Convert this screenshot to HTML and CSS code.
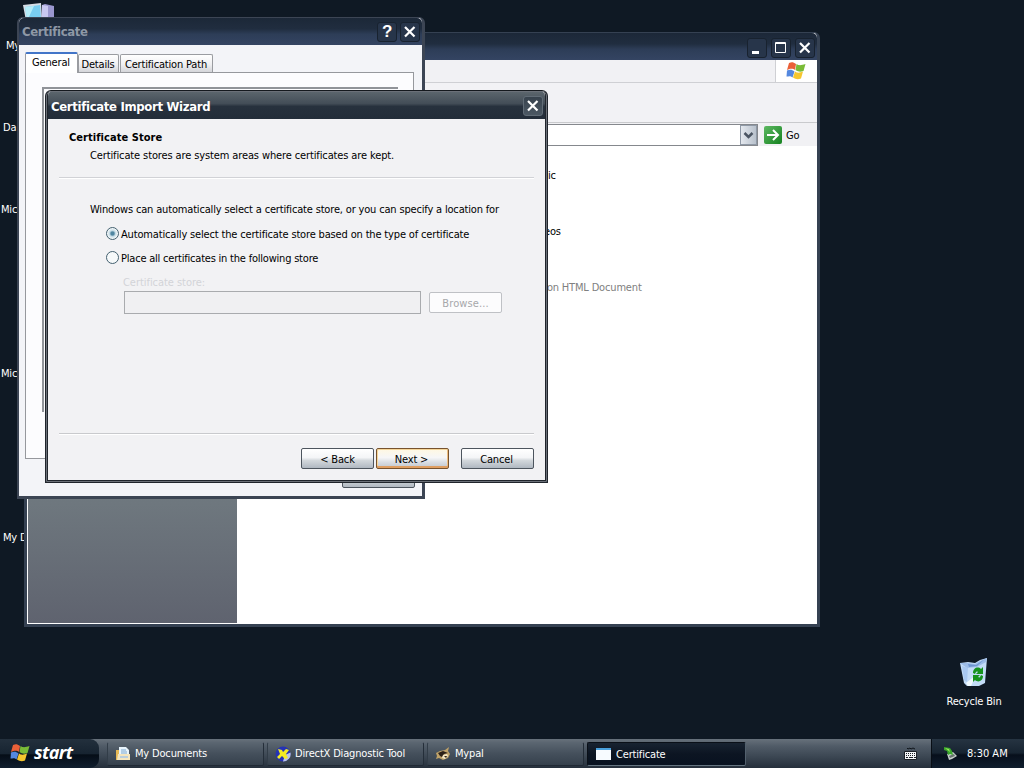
FILE: index.html
```html
<!DOCTYPE html>
<html lang="en">
<head>
    <meta charset="UTF-8">
    <title>Desktop</title>
    <link rel="stylesheet" href="styles.css">
</head>
<body>
    <div class="desktop">
        <svg class="icon-computer" width="32" height="18" viewBox="0 0 32 18">
            <path d="M19 2l3-1 9 2v15H18z" fill="#9a97cf"/>
            <path d="M19 2l6 1v15h-6z" fill="#c9c8f0"/>
            <path d="M0 2l18-2 1 18H3z" fill="#d5dde6"/>
            <path d="M2 4l15-2 1 14H4z" fill="#78cdf0"/>
            <path d="M2 4l9-1 -6 13H4z" fill="#b4ecf8"/>
        </svg>
        <span class="desk-label label-computer">My</span>
        <span class="desk-label label-dae">Da</span>
        <span class="desk-label label-mic1">Mic</span>
        <span class="desk-label label-mic2">Mic</span>
        <span class="desk-label label-docs">My D</span>

        <div class="recycle">
            <svg width="30" height="31" viewBox="0 0 30 31">
                <path d="M1 6l8-1 7 1 5-3 7-2-2 25-6 3H8L5 26z" fill="#c3dcf7"/>
                <path d="M1 6l8 0 7 1 5-3 7-3-1 4-9 5-10 1z" fill="#9dbde8"/>
                <path d="M9 7l8 1 9-6-8 7-8 1z" fill="#6f96d0"/>
                <path d="M3 9l6 2-1 14-3-2z" fill="#a9c8f0"/>
                <path d="M7 26l10-8-5 11H9z" fill="#f2faff"/>
                <path d="M14 16c0-5 5-7 8-4l2-2v7h-7l2-2c-2-1-2 0-3 2z" fill="#16931d"/>
                <path d="M24 19c0 5-5 7-8 4l-2 2v-7h7l-2 2c2 1 2 0 3-2z" fill="#16931d"/>
            </svg>
            <span class="recycle-label">Recycle Bin</span>
        </div>

        <div class="window explorer">
            <div class="titlebar">
                <div class="title-buttons">
                    <span class="tbtn"><svg width="18" height="18"><path d="M4 13.500h7" stroke="#fff" stroke-width="3"/></svg></span>
                    <span class="tbtn"><svg width="18" height="18"><path d="M3.500 3.500h10v10h-10zM3 4.500h11" fill="none" stroke="#fff"/></svg></span>
                    <span class="tbtn"><svg width="18" height="18"><path d="M4 4l9.500 9.500M13.500 4L4 13.500" stroke="#fff" stroke-width="2.200"/></svg></span>
                </div>
            </div>
            <div class="menubar">
                <div class="brand">
                    <svg width="20" height="18" viewBox="0 0 20 18">
                        <path d="M3 1c3-1 4-1 7 1L9 8C6 6 4 7 1 8z" fill="#ea6038"/>
                        <path d="M10.500 2c3 2 5 1 9 0l-2 7c-3 1-5 1-8-1z" fill="#79bb37"/>
                        <path d="M1 8.500c3-1 5-1 7.500 1l-2 6c-2-2-4-1-6-1z" fill="#5488df"/>
                        <path d="M9 9.500c3 2 5 1 8 0l-2 7c-3 1-5 1-8-1z" fill="#f5c62f"/>
                    </svg>
                </div>
            </div>
            <div class="toolbar"></div>
            <div class="addressbar">
                <div class="address-field"><span class="dropdown"><svg width="15" height="18"><path d="M3.500 7l4 4 4-4" fill="none" stroke="#4b5563" stroke-width="2.500"/></svg></span></div>
                <span class="go-icon"><svg width="18" height="18"><path d="M3 9h11M9 4l5 5-5 5" fill="none" stroke="#fff" stroke-width="2"/></svg></span>
                <span class="go-text">Go</span>
            </div>
            <div class="explorer-body">
                <div class="side-panel"></div>
                <div class="files">
                    <p class="file-name">ic</p>
                    <p class="file-name videos">eos</p>
                    <p class="file-name file-type">oon HTML Document</p>
                </div>
            </div>
        </div>

        <div class="window certificate">
            <div class="titlebar">
                <h2 class="title">Certificate</h2>
                <div class="title-buttons">
                    <span class="tbtn help">?</span>
                    <span class="tbtn"><svg width="18" height="18"><path d="M4 4l9.500 9.500M13.500 4L4 13.500" stroke="#fff" stroke-width="2.200"/></svg></span>
                </div>
            </div>
            <div class="cert-body">
                <div class="tabs">
                    <span class="tab active">General</span>
                    <span class="tab tab-details">Details</span>
                    <span class="tab tab-path">Certification Path</span>
                </div>
                <div class="tab-page"><div class="cert-info"></div></div>
                <div class="cert-footer"><span class="btn"></span></div>
            </div>
        </div>

        <div class="window wizard">
            <div class="titlebar">
                <h2 class="title">Certificate Import Wizard</h2>
                <div class="title-buttons">
                    <span class="tbtn"><svg width="18" height="18"><path d="M4 4l9.500 9.500M13.500 4L4 13.500" stroke="#fff" stroke-width="2.200"/></svg></span>
                </div>
            </div>
            <div class="wizard-body">
                <div class="wizard-head">
                    <h3 class="wizard-title">Certificate Store</h3>
                    <p class="wizard-sub">Certificate stores are system areas where certificates are kept.</p>
                </div>
                <div class="wizard-main">
                    <p class="intro">Windows can automatically select a certificate store, or you can specify a location for</p>
                    <div class="option"><span class="radio checked"></span><span class="opt-auto">Automatically select the certificate store based on the type of certificate</span></div>
                    <div class="option"><span class="radio"></span><span class="opt-place">Place all certificates in the following store</span></div>
                    <div class="store-label">Certificate store:</div>
                    <div class="store-row">
                        <div class="store-field"></div>
                        <span class="btn disabled">Browse...</span>
                    </div>
                </div>
                <div class="wizard-footer">
                    <span class="btn">&lt; Back</span>
                    <span class="btn default">Next &gt;</span>
                    <span class="btn cancel">Cancel</span>
                </div>
            </div>
        </div>

        <div class="taskbar">
            <div class="start">
                <svg width="20" height="18" viewBox="0 0 20 18">
                    <path d="M3 1c3-1 4-1 7 1L9 8C6 6 4 7 1 8z" fill="#ea6038"/>
                    <path d="M10.500 2c3 2 5 1 9 0l-2 7c-3 1-5 1-8-1z" fill="#79bb37"/>
                    <path d="M1 8.500c3-1 5-1 7.500 1l-2 6c-2-2-4-1-6-1z" fill="#5488df"/>
                    <path d="M9 9.500c3 2 5 1 8 0l-2 7c-3 1-5 1-8-1z" fill="#f5c62f"/>
                </svg>
                <span class="start-text">start</span>
            </div>
            <div class="tasks">
                <div class="task">
                    <svg width="16" height="16"><path d="M1 4h4l1-2h5v12H1z" fill="#e7b955"/><path d="M4 1h7l3 3v8H4z" fill="#e8f4fc"/><path d="M6 4h5M6 6h6M6 8h6" stroke="#7ba7cf"/><path d="M3 8h12v6H2z" fill="#f4e5bd"/><path d="M5 10h8v2H5z" fill="#b9cedd"/></svg>
                    <span>My Documents</span>
                </div>
                <div class="task">
                    <svg width="16" height="16"><circle cx="8" cy="8" r="7.500" fill="#2533b4"/><path d="M8 15.500a7.500 7.500 0 0 0 7.500-9L10 9z" fill="#b9c2e8"/><path d="M3 3l4 1 1 2 3-3 3 1-3 4 2 4-3 1-3-3-3 3-2-2 3-3z" fill="#f4ec22"/></svg>
                    <span>DirectX Diagnostic Tool</span>
                </div>
                <div class="task">
                    <svg width="16" height="16"><path d="M1 7l4-2 5-1 4-3-1 4 2 3-2 4-5 2-4-2-3 1 1-3z" fill="#bfa269"/><path d="M3 7l5-2 5 2-4 1-2 3-2-1z" fill="#2c2118"/><path d="M8 9l4-1 1 2-3 3-3-1z" fill="#f2e5c4"/><path d="M9 10l3 0-1 2z" fill="#342416"/></svg>
                    <span>Mypal</span>
                </div>
                <div class="task current">
                    <svg width="16" height="14"><path d="M0 0h15v12H0z" fill="#f7fbff"/><path d="M0 0h15v2H0z" fill="#4aa1dd"/></svg>
                    <span>Certificate</span>
                </div>
            </div>
            <svg class="keyboard" width="13" height="14"><path d="M3 1l1 1 2-1 1 1 2-1 2 1" fill="none" stroke="#10151b"/><path d="M.5 4.500h12v8H.5z" fill="#f4f6f8" stroke="#1b2026"/><path d="M2 6.500h10M2 8.500h10" stroke="#1b2026" stroke-dasharray="1 1"/><path d="M2 10.500h2M5 10.500h4M10 10.500h2" stroke="#1b2026"/></svg>
            <div class="tray">
                <svg width="14" height="14"><path d="M4 8l6-2 4 4-5 3-3 1z" fill="#c8cfcc"/><path d="M6 10l5-2 1 2-5 2z" fill="#68736f"/><path d="M1 1l6 1 2 3 1 4-3-1-2 1-1-4-3-1z" fill="#39a62b"/><path d="M2 2l4 1 1 3z" fill="#9ae65d"/></svg>
                <span class="clock">8:30 AM</span>
            </div>
        </div>
    </div>
</body>
</html>
```
FILE: styles.css
```css
* {
    margin: 0;
    padding: 0;
    box-sizing: border-box;
}
body {
    font-family: "DejaVu Sans Condensed", "DejaVu Sans", sans-serif;
    font-size: 11px;
    line-height: 14px;
    letter-spacing: -0.17px;
    color: #000;
    overflow: hidden;
}
svg {
    display: block;
    flex: none;
}
.desktop {
    position: relative;
    width: 1024px;
    height: 768px;
    overflow: hidden;
    background-color: #0f1924;
    white-space: nowrap;
}

/* desktop icons */
.icon-computer {
    position: absolute;
    left: 23px;
    top: 3px;
}
.desk-label {
    position: absolute;
    color: #fff;
}
.label-computer { left: 6px; top: 39px; }
.label-dae { left: 3px; top: 121px; }
.label-mic1 { left: 1px; top: 203px; }
.label-mic2 { left: 1px; top: 367px; }
.label-docs { left: 3px; top: 531px; }
.recycle {
    position: absolute;
    left: 944px;
    top: 657px;
    width: 60px;
    display: flex;
    flex-direction: column;
    align-items: center;
    gap: 7px;
    color: #fff;
}

/* windows */
.window {
    position: absolute;
    display: flex;
    flex-direction: column;
    border-radius: 6px 6px 0 0;
}
.titlebar {
    display: flex;
    align-items: center;
    flex: none;
    height: 27px;
    background: linear-gradient(#1c2838, #202d3f 40%, #2d3d57 60%, #344462);
    border-radius: 5px 5px 0 0;
}
.title {
    font-size: 13px;
    font-weight: bold;
    letter-spacing: -0.33px;
    color: #8e98a6;
}
.title-buttons {
    display: flex;
    gap: 3px;
    margin-left: auto;
}
.tbtn {
    width: 20px;
    height: 20px;
    border: 1px solid #18222f;
    border-radius: 3px;
    background-color: #27354a;
    color: #fff;
}
.explorer .title-buttons {
    gap: 4px;
}
.help {
    font: bold 17px/18px "Liberation Sans", sans-serif;
    text-align: center;
}
.btn {
    width: 73px;
    height: 21px;
    padding-top: 1px;
    line-height: 20px;
    border: 1px solid #4d555e;
    border-radius: 2px;
    background: linear-gradient(#fff 0%, #f4f5f7 45%, #d3d8dc 60%, #b0b8c1 100%);
    text-align: center;
}

.explorer {
    left: 24px;
    top: 32px;
    width: 796px;
    height: 595px;
    border: 1px solid #354152;
    border-right-width: 3px;
    border-bottom-width: 3px;
    border-left-width: 3px;
    background-color: #fff;
}
.explorer .titlebar {
    padding-right: 2px;
    padding-top: 2px;
}
.menubar {
    display: flex;
    flex: none;
    justify-content: flex-end;
    height: 23px;
    background-color: #f1f1f4;
    border-bottom: 1px solid #cfd0d4;
}
.brand {
    width: 42px;
    padding: 2px 0 0 10px;
    background-color: #fff;
    border-left: 1px solid #cfd0d4;
}
.toolbar {
    flex: none;
    height: 40px;
    background-color: #f2f2f5;
    border-bottom: 1px solid #c9cacd;
}
.addressbar {
    display: flex;
    align-items: center;
    flex: none;
    height: 23px;
    background-color: #f1f1f4;
}
.address-field {
    display: flex;
    justify-content: flex-end;
    width: 731px;
    height: 22px;
    border: 1px solid #85888d;
    background-color: #fff;
}
.dropdown {
    width: 17px;
    height: 20px;
    border: 1px solid #8f99a6;
    background: linear-gradient(90deg, #e4e8ee, #b8c1cc);
}
.go-icon {
    width: 18px;
    height: 18px;
    margin-left: 6px;
    border-radius: 2px;
    background: linear-gradient(135deg, #5db862, #168320);
}
.go-text {
    margin-left: 4px;
    padding-top: 2px;
}
.explorer-body {
    display: flex;
    flex: 1;
    border-left: 1px solid #fff;
    border-bottom: 1px solid #fff;
}
.side-panel {
    width: 209px;
    background: linear-gradient(#7c8a90 0%, #6e777e 75%, #5f636f 100%);
}
.files {
    padding: 23px 0 0 311px;
}
.file-name {
    margin-bottom: 42px;
}
.videos {
    margin-left: -4px;
}
.file-type {
    margin-left: -7px;
    color: #808080;
}

.certificate {
    left: 17px;
    top: 17px;
    width: 408px;
    height: 482px;
    border: 1px solid #3c4554;
    border-width: 1px 3px 3px 2px;
    background-color: #f3f4f8;
}
.certificate .titlebar {
    padding: 1px 2px 0 3px;
}
.cert-body {
    display: flex;
    flex-direction: column;
    flex: 1;
    padding: 7px 7px 0 6px;
}
.tabs {
    display: flex;
    align-items: flex-end;
    height: 20px;
}
.tab {
    height: 18px;
    padding-right: 1px;
    line-height: 19px;
    border: 1px solid #9a9ca1;
    border-bottom: none;
    border-radius: 2px 2px 0 0;
    background: linear-gradient(#fff, #f0f0f2 55%, #d4d5da);
    text-align: center;
}
.active {
    width: 53px;
    height: 21px;
    line-height: 18px;
    margin-bottom: -1px;
    border-top: 2px solid #4275c8;
    background: #fff;
    z-index: 1;
}
.tab-details {
    width: 41px;
}
.tab-path {
    width: 93px;
    margin-left: 1px;
}
.tab-page {
    width: 389px;
    height: 387px;
    padding: 14px 15px 46px 16px;
    border: 1px solid #96989d;
    background-color: #fcfcfe;
}
.cert-info {
    height: 100%;
    border-top: 2px solid #909398;
    border-left: 2px solid #909398;
}
.cert-footer {
    display: flex;
    justify-content: flex-end;
    padding-top: 8px;
}

.wizard {
    left: 45px;
    top: 90px;
    width: 503px;
    height: 393px;
    border: 3px solid #20252c;
    border-top: 1px solid #15191e;
    background-color: #f2f2f4;
}
/* light line that runs down the middle of the frame */
.wizard::after {
    content: '';
    position: absolute;
    inset: 0 -2px -2px;
    border: 1px solid #6b7078;
    border-radius: 5px 5px 0 0;
    pointer-events: none;
}
.wizard .titlebar {
    height: 28px;
    padding: 2px 2px 0 3px;
    background: linear-gradient(#5d676e, #434d57 45%, #27313d 55%, #232d39);
}
.wizard .title {
    padding-top: 1px;
    color: #fff;
}
.wizard .title-buttons {
    padding-bottom: 1px;
}
.wizard .tbtn {
    border-color: #616c76;
    background: linear-gradient(#37424d, #4c5863);
}
.wizard-body {
    display: flex;
    flex-direction: column;
    flex: 1;
    padding: 0 11px 11px;
}
.wizard-head {
    height: 59px;
    padding: 12px 0 0 10px;
    border-bottom: 1px solid #d1d2d6;
    box-shadow: 0 1px #fff;
}
.wizard-title {
    font-size: 11px;
    letter-spacing: 0.05px;
}
.wizard-sub {
    padding: 4px 0 0 21px;
    letter-spacing: -0.12px;
}
.wizard-main {
    flex: 1;
    padding: 25px 0 0 31px;
}
.intro {
    margin-bottom: 10px;
}
.option {
    display: flex;
    align-items: center;
    gap: 2px;
    height: 14px;
    margin: 0 0 10px 16px;
}
.opt-auto, .opt-place {
    padding-top: 1px;
}
.opt-auto {
    letter-spacing: -0.16px;
}
.opt-place {
    letter-spacing: -0.21px;
}
.radio {
    width: 13px;
    height: 13px;
    margin-bottom: 1px;
    border: 1px solid #43606f;
    border-radius: 50%;
    background-color: #f6f9fa;
}
.checked {
    background: radial-gradient(circle, #4f86a1 0 1.5px, #c5dbe5 3px, #f0f6f8 5px);
}
.store-label {
    padding: 1px 0 0 33px;
    letter-spacing: -0.05px;
    color: #d3d4d8;
}
.store-row {
    display: flex;
    align-items: center;
    gap: 8px;
    padding: 1px 0 0 34px;
}
.store-field {
    width: 297px;
    height: 23px;
    border: 1px solid #a9abae;
    background-color: #f0f0f2;
}
.disabled {
    border-color: #bfc1c5;
    background: #fcfcfd;
    color: #a7a8ab;
    letter-spacing: 0.1px;
}
.wizard-footer {
    display: flex;
    justify-content: flex-end;
    gap: 2px;
    padding-top: 14px;
    border-top: 1px solid #c9cacd;
    box-shadow: inset 0 1px #fff;
}
.default {
    border-color: #77532f;
    padding-right: 2px;
    background: linear-gradient(#fff8e2 0%, #f6f6f7 45%, #d9dde2 70%, #c0c6cd 100%);
    box-shadow: inset 0 -2px #df9e61, inset 1px 1px #f6d69a, inset -1px 0 #edbd80;
}
.cancel {
    margin-left: 10px;
    padding-right: 2px;
}

/* taskbar */
.taskbar {
    position: absolute;
    left: 0;
    top: 739px;
    width: 1024px;
    height: 29px;
    display: flex;
    align-items: center;
    color: #fff;
    background: linear-gradient(#67717b, #505b67 25%, #3c4753 60%, #252f3b);
}
.start {
    display: flex;
    align-items: center;
    gap: 4px;
    width: 99px;
    height: 29px;
    padding: 0 0 2px 10px;
    border-radius: 0 9px 9px 0;
    background: linear-gradient(#23303d, #172431 50%, #050d17 55%, #101e2e);
}
.start-text {
    padding-bottom: 1px;
    font: italic bold 18px/20px "Open Sans", sans-serif;
    letter-spacing: -0.6px;
}
.tasks {
    display: flex;
    gap: 3px;
    margin-left: 8px;
    padding-top: 1px;
}
.task {
    display: flex;
    align-items: center;
    gap: 4px;
    width: 157px;
    height: 24px;
    padding-left: 7px;
    border: 1px solid #35404b;
    border-color: #5b6671 #242e39 #202934 #323d48;
    border-radius: 2px;
    background: linear-gradient(#5a6570, #46515d 45%, #35404c);
}
.current {
    width: 159px;
    padding-left: 8px;
    padding-top: 1px;
    border-color: #0a1018 #52606d #647480 #0a1018;
    background: linear-gradient(#182331, #0c1522 50%, #081220);
}
.keyboard {
    margin-left: auto;
    margin-right: 14px;
}
.tray {
    display: flex;
    align-items: center;
    width: 93px;
    height: 29px;
    padding-left: 11px;
    border-left: 1px solid #080e15;
    background: linear-gradient(#263442, #172431 48%, #070f1b 55%, #101e2e);
}
.tray svg {
    margin-bottom: 2px;
}
.clock {
    margin-left: 10px;
    letter-spacing: 0;
}
```
